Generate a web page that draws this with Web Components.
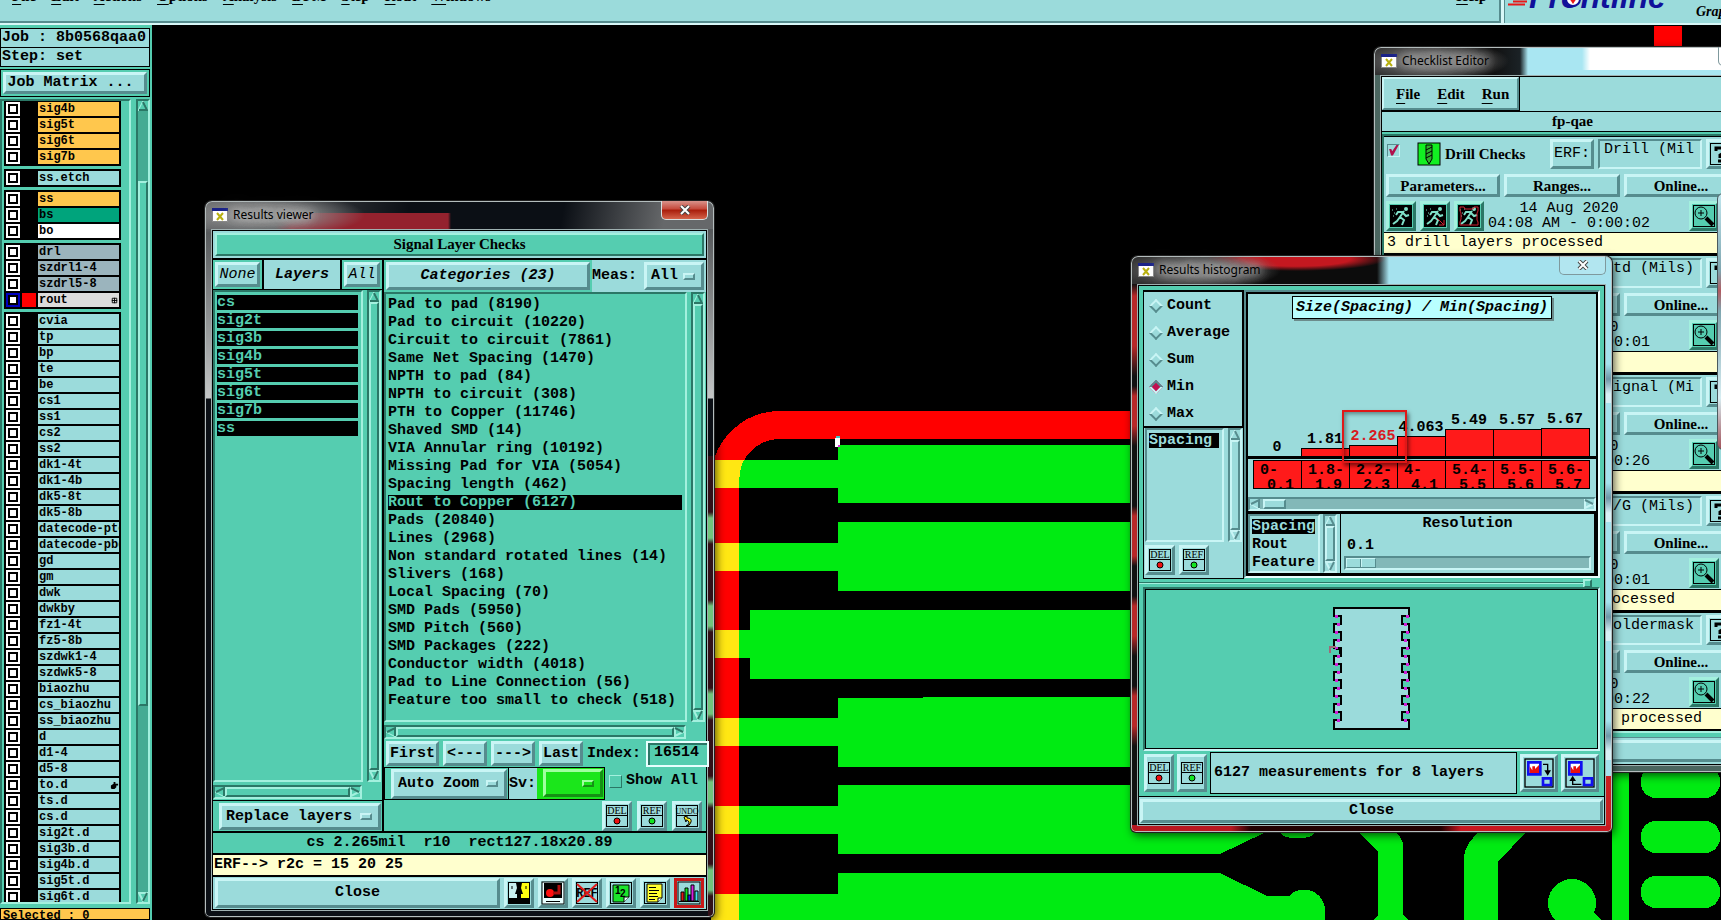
<!DOCTYPE html>
<html lang="en">
<head>
<meta charset="utf-8">
<title>Results viewer</title>
<style>
    body {
        margin: 0;
        height: 100vh;
        overflow: hidden;
        display: grid;
        grid-template-rows: 25px minmax(0, 1fr);
        background: #000;
        color: #000;
        font: bold 15px/18px "Liberation Mono", monospace;
        --aqua: #9bdbdb;
        --teal: #55cdb0;
        --orange: #ffc74d;
        --cream: #ffffce;
    }

    main {
        display: grid;
        grid-template-columns: 152px minmax(0, 1fr);
        min-height: 0;
    }
</style>
</head>
<body>
<app-menubar></app-menubar>
<main>
    <layer-sidebar></layer-sidebar>
    <work-area></work-area>
</main>

<script>
const base = `
    *, *::before { box-sizing: border-box; }
    :host { display: block; box-sizing: border-box; }
    button, input, select { font: inherit; color: inherit; margin: 0; border-radius: 0; outline: none; }
    .aqua { --face: #9bdbdb; --hi: #c9f5f5; --lo: #568c8e; }
    .teal { --face: #55cdb0; --hi: #a3f0de; --lo: #2b7766; }
    .serif { font-family: "Liberation Serif", serif; }
`;

function define(name, html, setup) {
  const template = document.createElement("template");
  template.innerHTML = html;
  customElements.define(name, class extends HTMLElement {
    constructor() {
      super();
      this.attachShadow({ mode: "open" }).appendChild(template.content.cloneNode(true));
    }

    connectedCallback() {
      if (setup && !this.ready) {
        this.ready = true;
        setup(this, this.shadowRoot);
      }
    }
  });
}

const runner = (extra, color) => `
    <rect x="1" y="1" width="22" height="22" fill="#000"/>
    <g fill="none" stroke="${color}" stroke-width="2">
        <path d="M15 7L11 13L15 16L13 21M11 13L8 17L4 20M14 8L9 8L7 11M14 9L17 12L20 11"/>
        <path d="M3 6h1M5 9h1M7 5h1M4 12h1" stroke-width="1"/>
    </g>
    <circle cx="17" cy="5" r="2" fill="${color}"/>${extra}`;

const box = '<rect x="1.5" y="1.5" width="21" height="21" fill="none" stroke="#000"/>';

const labelled = (text, mark, size = 10) => `${box}
    <path d="M1 11.5H23" stroke="#000"/>
    <text x="12" y="10" text-anchor="middle" font-family="Liberation Serif, serif" font-size="${size}" font-weight="400">${text}</text>${mark}`;

const chart = `<path d="M4 4h9v9H4z" fill="#fff" stroke="#1010f0" stroke-width="2"/><path d="M5 7l2 3V7h2v2l3-3v6H5z" fill="#e81010"/>
    <path d="M15 16h6v5h-6z" fill="none" stroke="#1010f0" stroke-width="2"/>`;

const ICONS = {
  del: labelled("DEL", '<circle cx="12" cy="17" r="3" fill="#f01010" stroke="#000"/>'),
  ref: labelled("REF", '<circle cx="12" cy="17" r="3" fill="#12e622" stroke="#000"/>'),
  undo: labelled("UNDO", '<path d="M9 13l3-1v2q5 0 4 4t-5 4q4-2 3-4t-3-2v2z" fill="#ffee20" stroke="#000"/>', 8),
  vase: `<rect x="1" y="1" width="11" height="22" fill="#c9f0f0"/><rect x="12" y="1" width="11" height="22" fill="#ffff10"/>
    <path d="M9 2h6l-1 5 2 6h-2v4h8v5H2v-5h8v-4H8l2-6z"/><path d="M5 5v3M19 5v3" stroke="#000"/>` + box,
  monitor: `<rect x="1" y="1" width="22" height="22" fill="#e8ffff" stroke="#000"/><path d="M3 2h18v15H3z"/>
    <circle cx="9" cy="12" r="4" fill="#ff1010"/><path d="M12 12h6V4" stroke="#b01010" stroke-width="3" fill="none"/><path d="M5 20.5h14" stroke="#000"/>`,
  noref: box + `<text x="12" y="16" text-anchor="middle" font-family="Liberation Mono, monospace" font-size="12">REF</text>
    <path d="M2 3L22 21M22 3L2 21" stroke="#e01818" stroke-width="2"/>`,
  pages: box + `<path d="M4 4h16v12l-5 5H4z" fill="#1be42b" stroke="#000"/><path d="M20 16h-5v5" fill="#e8ffff" stroke="#000"/>
    <text x="6" y="13" font-family="Liberation Sans, sans-serif" font-size="10">1</text><text x="11" y="16" font-family="Liberation Sans, sans-serif" font-size="10">2</text>`,
  notes: box + `<path d="M4 3h15v14l-4 4H4z" fill="#ffff30" stroke="#000"/><path d="M19 17h-4v4" fill="#fff" stroke="#000"/>
    <path d="M6 6.5h7M6 9.5h10M6 12.5h8M6 15.5h9M6 18.5h6" stroke="#000"/>`,
  bars: `<rect x="1" y="1" width="22" height="22" fill="#9bdbdb" stroke="#000"/><path d="M2 20.5h20" stroke="#000"/>
    <g stroke="#000"><path d="M4 11h3v9H4z" fill="#e01818"/><path d="M8 7h3v13H8z" fill="#12e622"/><path d="M11 14h3v6h-3z" fill="#1a1af0"/>
    <path d="M14 4h3v16h-3z" fill="#d820e0"/><path d="M18 10h3v10h-3z" fill="#40e8f0"/></g>`,
  run: runner("", "#7fe0c8"),
  runPick: runner('<path d="M14 14l7 7m0-5v5h-5" stroke="#d02030" fill="none"/>', "#7fe0c8"),
  runAll: runner('<path d="M3 3h4l1 2h8l1-2h4v4l-1 2v7l1 2v3H3v-3l1-3V9L3 7z" stroke="#d02030" stroke-width="1" fill="none"/>', "#7fe0c8"),
  zoom: box + `<circle cx="9" cy="9" r="6" fill="none" stroke="#000"/>
    <path d="M6 9h6M9 6v6" stroke="#000"/><path d="M14 14l7 7" stroke="#000" stroke-width="4"/>`,
  help: box + '<path d="M7 9V6h9v4l-5 3v3M9 19h5" fill="none" stroke="#000" stroke-width="3"/>',
  drill: `<rect x="1" y="1" width="22" height="22" fill="#12f022" stroke="#000"/>
    <path d="M9 3h6v14l-3 5-3-5z" fill="#30b030" stroke="#000"/><path d="M9 8l6-3M9 12l6-3M9 16l6-3" stroke="#000"/>`,
  send: box + chart + '<path d="M15 5.5h3.500V12" fill="none" stroke="#000"/><path d="M16 10h5l-2.500 4z"/>',
  fetch: box + chart + '<path d="M6.500 17v3.500H13" fill="none" stroke="#000"/><path d="M4 18h5l-2.500-4z"/>',
};

// Push button with a Motif bevel; tone picks the colour set
define("motif-button", `
<style>${base}
    button {
        display: flex;
        align-items: center;
        justify-content: center;
        width: 100%;
        height: 100%;
        padding: 0;
        white-space: pre;
        background: var(--face);
        border: 3px solid;
        border-color: var(--hi) var(--lo) var(--lo) var(--hi);
    }
</style>
<button type="button" class="aqua"><slot></slot></button>
`, (host, root) => {
  if (host.getAttribute("tone")) root.querySelector("button").className = host.getAttribute("tone");
});

define("tool-button", `
<style>${base}
    :host { width: 30px; height: 30px; flex: none; }
    button {
        display: grid;
        place-items: center;
        width: 100%;
        height: 100%;
        padding: 0;
        background: var(--face);
        border: 3px solid;
        border-color: var(--hi) var(--lo) var(--lo) var(--hi);
    }
    :host([active]) button { border-color: #c81818; }
    svg { display: block; width: 24px; height: 24px; }
    :host([big]) svg { width: 32px; height: 32px; }
</style>
<button type="button" class="aqua"></button>
`, (host, root) => {
  const button = root.querySelector("button");
  button.className = host.getAttribute("tone") || "aqua";
  button.setAttribute("aria-label", host.getAttribute("label") || host.getAttribute("icon"));
  button.innerHTML = `<svg viewBox="0 0 24 24" aria-hidden="true">${ICONS[host.getAttribute("icon")]}</svg>`;
});

define("option-menu", `
<style>${base}
    label {
        display: flex;
        align-items: center;
        height: 100%;
        padding: 0 6px 0 4px;
        background: var(--face);
        border: 3px solid;
        border-color: var(--hi) var(--lo) var(--lo) var(--hi);
    }
    select { flex: 1; min-width: 0; appearance: none; border: 0; padding: 0; background: transparent; }
    i {
        width: 12px;
        height: 7px;
        border: 2px solid;
        border-color: var(--hi) var(--lo) var(--lo) var(--hi);
    }
    .lime { --face: #1be61b; --hi: #a0ffa0; --lo: #159015; }
</style>
<label class="aqua"><select><option></option></select><i></i></label>
`, (host, root) => {
  const select = root.querySelector("select");
  root.querySelector("label").className = host.getAttribute("tone") || "aqua";
  select.setAttribute("aria-label", host.getAttribute("label"));
  root.querySelector("option").textContent = host.getAttribute("value") || "";
});

define("motif-scroll", `
<style>${base}
    .bar {
        display: flex;
        flex-direction: column;
        width: 14px;
        height: 100%;
        border: 2px solid;
        border-color: var(--lo) var(--hi) var(--hi) var(--lo);
        background: var(--trough);
    }
    .teal { --trough: #45ab93; }
    .aqua { --trough: #82b8b8; }
    .thumb {
        background: var(--face);
        border: 2px solid;
        border-color: var(--hi) var(--lo) var(--lo) var(--hi);
    }
    svg { display: block; width: 10px; height: 10px; flex: none; background: var(--face); }
    .flat { flex-direction: row; width: 100%; height: 14px; }
    .flat svg { transform: rotate(-90deg); }
    path { fill: var(--face); stroke: var(--hi); stroke-width: 2; }
    path + path { stroke: var(--lo); }
</style>
<div class="bar">
    <svg viewBox="0 0 10 10"><path d="M1 9L5 1L9 9z"/><path d="M1 9H9L5 1"/></svg>
    <span class="pre"></span><span class="thumb"></span><span class="post"></span>
    <svg viewBox="0 0 10 10"><path d="M5 9L1 1H9z"/><path d="M5 9L9 1"/></svg>
</div>
`, (host, root) => {
  const [before, size] = (host.getAttribute("range") || "0 100").split(" ").map(Number);
  root.querySelector(".bar").classList.add(host.getAttribute("tone") || "teal");
  root.querySelector(".bar").classList.toggle("flat", host.hasAttribute("horizontal"));
  root.querySelector(".pre").style.flex = before;
  root.querySelector(".thumb").style.flex = size;
  root.querySelector(".post").style.flex = 100 - before - size;
});

define("pick-list", `
<style>${base}
    :host { overflow: hidden; }
    ul {
        height: 100%;
        margin: 0;
        padding: 3px 3px 0 2px;
        list-style: none;
        border: 2px solid;
        border-color: var(--lo) var(--hi) var(--hi) var(--lo);
        background: var(--face);
        overflow: hidden;
    }
    li { height: 15px; line-height: 15px; margin-bottom: 3px; white-space: pre; }
    li.on { background: #000; color: var(--face); }
</style>
<ul class="teal"></ul>
`, (host, root) => {
  const list = root.querySelector("ul");
  const selected = (host.getAttribute("selected") || "").split("|");
  list.className = host.getAttribute("tone") || "teal";
  for (const name of host.getAttribute("items").split("|")) {
    const item = document.createElement("li");
    item.textContent = name;
    item.classList.toggle("on", selected.includes(name));
    list.appendChild(item);
  }
});

// Top-level menu bar, scrolled partly out of view
define("app-menubar", `
<style>${base}
    :host {
        display: flex;
        gap: 3px;
        overflow: hidden;
        background: #d8f8f8;
        padding-bottom: 2px;
        font: bold 15px/18px "Liberation Serif", serif;
    }
    nav, .brand { background: var(--aqua); }
    nav {
        flex: 1;
        display: flex;
        gap: 15px;
        padding: 0 12px;
        border: solid #568c8e;
        border-width: 0 2px 2px 0;
    }
    a { color: inherit; text-decoration: none; margin-top: -13px; }
    a::first-letter { text-decoration: underline; text-underline-offset: 3px; }
    a:last-child { margin-left: auto; }
    .brand { width: 217px; border-left: 1px solid #568c8e; }
    svg { display: block; width: 100%; height: 23px; }
</style>
<nav>
    <a href="#">File</a><a href="#">Edit</a><a href="#">Actions</a><a href="#">Options</a><a href="#">Analysis</a><a href="#">DFM</a><a href="#">Step</a><a href="#">Rout</a><a href="#">Windows</a><a href="#">Help</a>
</nav>
<div class="brand">
    <svg viewBox="0 0 217 23" preserveAspectRatio="xMinYMin slice">
        <path d="M8 1.5h14M3 4.5h17M14 -1.5h10" stroke="#e81818" stroke-width="2"/>
        <text x="24" y="8" font-family="Liberation Sans, sans-serif" font-style="italic" font-size="32" fill="#10109a">Frontline</text>
        <circle cx="68" cy="-1" r="7" fill="#fff" stroke="#10109a" stroke-width="2"/>
        <path d="M64 -2L68 4L72 -2z" fill="#e81818"/>
        <text x="191" y="16" font-style="italic" font-size="14">Graphicom</text>
    </svg>
</div>
`);

define("layer-row", `
<style>${base}
    :host { display: flex; height: 16px; padding: 1px 1px 1px 0; font-size: 12px; line-height: 14px; }
    input {
        appearance: none;
        flex: none;
        width: 14px;
        height: 14px;
        margin-left: 1px;
        background: #fff;
        border: 2px solid var(--box, #fff);
        box-shadow: inset 0 0 0 2px #000;
    }
    .swatch { width: 14px; margin: 0 2px; background: var(--swatch, #000); }
    label {
        flex: 1;
        overflow: hidden;
        padding-left: 1px;
        background: var(--row, var(--aqua));
        white-space: nowrap;
        display: flex;
        justify-content: space-between;
    }
    svg { width: 9px; height: 9px; margin: 3px 0; flex: none; }
</style>
<input type="checkbox" id="pick"><span class="swatch"></span><label for="pick"><slot></slot></label>
`, (host, root) => {
  const marks = {
    grid: '<path d="M2.5 2.5h5v5h-5zM5 2v6M2 5h6" fill="none" stroke="#000"/>',
    hand: '<path d="M1 5l3-2V1h2v2h3v2H7v2L5 9H2L1 8z"/>',
  };
  const mark = host.getAttribute("mark");
  if (mark) root.querySelector("label").insertAdjacentHTML("beforeend", `<svg viewBox="0 0 10 10">${marks[mark]}</svg>`);
});

const LAYER_GROUPS = [
  { rows: "sig4b sig5t sig6t sig7b", color: "#ffc74d" },
  { rows: "ss.etch" },
  { rows: "ss bs bo", colors: { ss: "#ffc74d", bs: "#00a47c", bo: "#fff" } },
  { rows: "drl szdrl1-4 szdrl5-8 rout", color: "#9bb4bd", colors: { rout: "#dcdcdc" } },
  { rows: "cvia tp bp te be cs1 ss1 cs2 ss2 dk1-4t dk1-4b dk5-8t dk5-8b datecode-pte datecode-pbe gd gm dwk dwkby fz1-4t fz5-8b szdwk1-4 szdwk5-8 biaozhu cs_biaozhu ss_biaozhu d d1-4 d5-8 to.d ts.d cs.d sig2t.d sig3b.d sig4b.d sig5t.d sig6t.d" },
];

define("layer-sidebar", `
<style>${base}
    :host {
        display: flex;
        flex-direction: column;
        min-height: 0;
        overflow: hidden;
        background: var(--teal);
        padding: 3px 2px 0 0;
    }
    .info { border: 1px solid #000; background: var(--aqua); height: 20px; padding-left: 1px; white-space: pre; }
    .info + .info { margin-top: -1px; }
    .matrix { border: 1px solid #000; height: 28px; margin: 2px 0; padding: 2px; }
    .matrix motif-button { height: 22px; }
    .lists { flex: 1; min-height: 0; display: flex; gap: 5px; }
    .frame {
        flex: 1;
        min-width: 0;
        overflow: hidden;
        padding: 0 8px 0 2px;
        border: 2px solid;
        border-color: #2b7766 #a3f0de #a3f0de #2b7766;
    }
    .group { background: #000; padding: 1px; margin-bottom: 3px; }
    .group:first-child { padding-top: 0; }
    .selected { border: 1px solid #000; background: var(--orange); margin-top: 4px; height: 12px; padding-left: 2px; font-size: 12px; line-height: 15px; white-space: pre; overflow: hidden; }
</style>
<div class="info">Job : 8b0568qaa0</div>
<div class="info">Step: set</div>
<div class="matrix"><motif-button>Job Matrix ... </motif-button></div>
<div class="lists">
    <div class="frame"></div>
    <motif-scroll range="9 67"></motif-scroll>
</div>
<div class="selected">Selected : 0</div>
`, (host, root) => {
  const frame = root.querySelector(".frame");
  for (const { rows, color, colors = {} } of LAYER_GROUPS) {
    const group = document.createElement("div");
    group.className = "group";
    for (const name of rows.split(" ")) {
      const row = document.createElement("layer-row");
      row.textContent = name;
      const fill = colors[name] || color;
      if (fill) row.style.setProperty("--row", fill);
      if (name === "rout") {
        row.setAttribute("mark", "grid");
        row.style.setProperty("--swatch", "#f00");
        row.style.setProperty("--box", "#0000c0");
      }
      if (name === "to.d") row.setAttribute("mark", "hand");
      group.appendChild(row);
    }
    frame.appendChild(group);
  }
});

// Copper (green), rout path (red) and their overlap (yellow)
define("pcb-canvas", `
<style>${base}
    svg { display: block; width: 100%; height: 100%; background: #000; }
</style>
<svg aria-label="Board view">
    <g transform="translate(-152 -25)" shape-rendering="crispEdges">
        <g fill="#00eb12">
            <path d="M725 460H838V445H1180V503H838V488H725z"/>
            <path d="M725 543H838V522H1180V591H838V571H725z"/>
            <path d="M725 630H750V610H1180V679H750V658H725z"/>
            <path d="M725 718H838V698H923V697H1180V767H838V746H725z"/>
            <path d="M725 806H838V785H1315V833A19 9 0 0 1 1280 833H1264L1220 854H838V834H725z"/>
            <path d="M725 894H838V873H1220L1267 896H1289A21 21 0 0 1 1325 909V920H725z"/>
            <path d="M1358 831L1378 852V915L1373 920H1408L1403 915V845Q1403 838 1394 831z"/>
            <path d="M1480 831Q1464 845 1464 858V920H1498V862L1527 831z"/>
            <circle cx="1572" cy="903" r="24"/>
            <path d="M1590 908L1601 920H1570z"/>
            <rect x="1612" y="740" width="17" height="180"/>
            <rect x="1641" y="766" width="79" height="32" rx="15"/>
            <rect x="1641" y="821" width="79" height="32" rx="15"/>
            <rect x="1641" y="876" width="79" height="32" rx="15"/>
        </g>
        <path d="M1180 425H780A55 55 0 0 0 725 480V920" fill="none" stroke="#f00" stroke-width="28"/>
        <rect x="1654" y="26" width="28" height="40" fill="#f00"/>
        <path d="M711 460H744Q739 468 739 488H711zM711 543h28v28h-28zM711 630h28v28h-28zM711 718h28v28h-28zM711 806h28v28h-28zM711 894h28v26h-28z" fill="#ffe713"/>
        <path d="M835 438h5v9h-5z" fill="#fff"/>
        <path d="M836 436h4v2h-4z" fill="#40c0c0"/>
        <path d="M838 445h2v2h-2z" fill="#e020e0"/>
    </g>
</svg>
`);

// Aero glass frame; the client area is slotted in
define("glass-window", `
<style>${base}
    :host {
        display: flex;
        flex-direction: column;
        padding: 0 6px 6px;
        border-radius: 7px 7px 5px 5px;
        box-shadow: inset 0 0 0 1px #b4bdbd, 0 0 0 1px #202020, 2px 3px 10px rgba(0, 0, 0, .7);
    }
    header { display: flex; align-items: center; gap: 5px; height: 28px; flex: none; padding-left: 1px; }
    header svg { width: 16px; height: 14px; flex: none; }
    h2 {
        flex: 1;
        margin: 0;
        font: 12px/18px "Noto Sans", sans-serif;
        text-shadow: 0 0 8px #ccc, 0 0 12px #bbb, 0 0 16px #aaa;
    }
    button {
        align-self: flex-start;
        width: 47px;
        height: 19px;
        padding: 0;
        border: 1px solid #d8dede;
        border-top: 0;
        border-radius: 0 0 5px 5px;
        background: linear-gradient(#d9938b, #c5483a 45%, #a81c0a 50%, #d4634a);
    }
    :host([quiet]) button { background: rgba(255, 255, 255, .15); border-color: #7f999d; }
    button svg { width: 12px; height: 10px; vertical-align: top; margin-top: 4px; }
    .client { flex: 1; min-height: 0; border: 1px solid #9fb0b0; background: #000; padding: 1px; }
</style>
<header>
    <svg viewBox="0 0 16 14"><path d="M.5.5h15v13H.5z" fill="#fff" stroke="#888"/><path d="M0 0h16v3H0z" fill="#1a2288"/><path d="M5 5l6 7M11 5l-6 7" stroke="#b8b010" stroke-width="2"/></svg>
    <h2></h2>
    <button type="button" aria-label="Close window"><svg viewBox="0 0 12 10"><path d="M2 1l8 8M10 1L2 9" stroke="#444" stroke-width="4"/><path d="M2 1l8 8M10 1L2 9" stroke="#fff" stroke-width="2"/></svg></button>
</header>
<div class="client"><slot></slot></div>
`, (host, root) => {
  root.querySelector("h2").textContent = host.getAttribute("heading");
});

define("results-viewer", `
<style>${base}
    :host {
        display: grid;
        grid-template-rows: 27px minmax(0, 1fr) 20px 20px 32px;
        gap: 2px;
        height: 100%;
        background: #000;
    }
    h3 {
        margin: 0;
        border: 2px solid #9bdbdb;
        font-size: 15px;
        text-align: center;
    }
    h3 span {
        display: block;
        height: 23px;
        line-height: 18px;
        border: 2px solid;
        border-color: var(--hi) var(--lo) var(--lo) var(--hi);
        background: var(--face);
    }
    .columns { display: grid; grid-template-columns: 169px minmax(0, 1fr); gap: 2px; min-height: 0; }
    .col { display: flex; flex-direction: column; min-height: 0; min-width: 0; background: var(--teal); }
    .tabs { display: flex; gap: 2px; height: 30px; padding-bottom: 1px; background: #000; font-style: italic; }
    .tabs div { background: var(--teal); padding: 2px; width: 49px; }
    .tabs .mid { flex: 1; background: var(--aqua); text-align: center; line-height: 26px; }
    .tabs div:last-child { width: 40px; }
    .tabs motif-button { height: 25px; font-weight: 400; }
    .list { flex: 1; min-height: 0; display: grid; grid-template-columns: minmax(0, 1fr) 14px; gap: 4px; padding-right: 1px; }
    .flat { padding: 3px 20px 1px 0; }
    .replace { border-top: 1px solid #000; padding: 2px 1px 1px 6px; height: 31px; }
    .replace option-menu { height: 27px; }
    .cats { display: flex; height: 32px; background: var(--aqua); }
    .cats .pick { width: 208px; padding: 2px; background: var(--teal); font-style: italic; }
    .cats .pick motif-button { height: 28px; }
    .cats label { flex: 1; line-height: 32px; }
    .cats option-menu { width: 60px; height: 28px; margin: 2px 2px 0 0; }
    .nav { display: flex; align-items: center; gap: 4px; height: 27px; padding-left: 2px; }
    .nav motif-button { flex: none; width: 44px; height: 25px; }
    .nav motif-button:first-child { width: 53px; }
    .nav label { flex: 1; text-align: right; padding-right: 1px; }
    .nav input {
        width: 63px;
        height: 26px;
        padding: 0 0 2px 6px;
        background: var(--teal);
        border: 2px solid #e8ffff;
        box-shadow: inset 2px 2px #2b7766;
    }
    .zoom { display: flex; height: 33px; }
    .zoom > div { border: 1px solid #000; display: flex; align-items: center; }
    .zoom .auto { width: 125px; padding: 0 1px 0 6px; }
    .zoom .sv { width: 97px; margin-left: -1px; background: var(--aqua); }
    .zoom .auto option-menu { flex: 1; height: 30px; }
    .zoom .green { flex: 1; height: 31px; margin-left: 1px; padding: 1px 1px 1px 6px; background: #1be61b; }
    .zoom .green option-menu { height: 28px; }
    .zoom .all { display: flex; gap: 4px; padding: 5px 0 0 4px; white-space: nowrap; line-height: 18px; }
    .all input {
        appearance: none;
        width: 13px;
        height: 13px;
        margin-top: 3px;
        border: 1px solid;
        border-color: #a3f0de #2b7766 #2b7766 #a3f0de;
    }
    .tools { display: flex; justify-content: flex-end; align-items: flex-end; gap: 5px; height: 31px; padding: 0 4px; }
    .status, .erf { line-height: 20px; white-space: pre; }
    .status { background: var(--teal); text-align: center; }
    .erf { background: var(--cream); padding-left: 1px; }
    .foot { display: flex; gap: 4px; background: var(--aqua); padding: 1px 2px; }
    .foot motif-button { flex: 1; height: 30px; }
</style>
<h3 class="serif teal"><span>Signal Layer Checks</span></h3>
<div class="columns">
    <div class="col">
        <div class="tabs">
            <div><motif-button>None</motif-button></div>
            <div class="mid">Layers</div>
            <div><motif-button>All</motif-button></div>
        </div>
        <div class="list">
            <pick-list items="cs|sig2t|sig3b|sig4b|sig5t|sig6t|sig7b|ss" selected="cs|sig2t|sig3b|sig4b|sig5t|sig6t|sig7b|ss"></pick-list>
            <motif-scroll></motif-scroll>
        </div>
        <div class="flat"><motif-scroll horizontal></motif-scroll></div>
        <div class="replace"><option-menu label="Replace layers" value="Replace layers"></option-menu></div>
    </div>
    <div class="col">
        <div class="cats">
            <div class="pick"><motif-button>Categories (23)</motif-button></div>
            <label>Meas:</label>
            <option-menu label="Meas" value="All"></option-menu>
        </div>
        <div class="list">
            <pick-list selected="Rout to Copper (6127)" items="Pad to pad (8190)|Pad to circuit (10220)|Circuit to circuit (7861)|Same Net Spacing (1470)|NPTH to pad (84)|NPTH to circuit (308)|PTH to Copper (11746)|Shaved SMD (14)|VIA Annular ring (10192)|Missing Pad for VIA (5054)|Spacing length (462)|Rout to Copper (6127)|Pads (20840)|Lines (2968)|Non standard rotated lines (14)|Slivers (168)|Local Spacing (70)|SMD Pads (5950)|SMD Pitch (560)|SMD Packages (222)|Conductor width (4018)|Pad to Line Connection (56)|Feature too small to check (518)"></pick-list>
            <motif-scroll></motif-scroll>
        </div>
        <div class="flat"><motif-scroll horizontal></motif-scroll></div>
        <div class="nav">
            <motif-button>First</motif-button><motif-button>&lt;---</motif-button><motif-button>---&gt;</motif-button><motif-button>Last</motif-button>
            <label for="index">Index:</label><input id="index" value="16514">
        </div>
        <div class="zoom">
            <div class="auto"><option-menu label="Zoom mode" value="Auto Zoom"></option-menu></div>
            <div class="sv"><span>Sv:</span><span class="green"><option-menu tone="lime" label="Sv"></option-menu></span></div>
            <label class="all"><input type="checkbox">Show All</label>
        </div>
        <div class="tools">
            <tool-button icon="del"></tool-button><tool-button icon="ref"></tool-button><tool-button icon="undo"></tool-button>
        </div>
    </div>
</div>
<div class="status">cs 2.265mil  r10  rect127.18x20.89</div>
<div class="erf">ERF--&gt; r2c = 15 20 25</div>
<div class="foot">
    <motif-button>Close</motif-button>
    <tool-button icon="vase"></tool-button><tool-button icon="monitor"></tool-button><tool-button icon="noref"></tool-button><tool-button icon="pages"></tool-button><tool-button icon="notes"></tool-button><tool-button icon="bars" active></tool-button>
</div>
`);

const BINS = [
  ["0", 0, "0-", "0.1"],
  ["1.81", 8, "1.8-", "1.9"],
  ["2.265", 11, "2.2-", "2.3"],
  ["4.063", 20, "4-", "4.1"],
  ["5.49", 27, "5.4-", "5.5"],
  ["5.57", 27, "5.5-", "5.6"],
  ["5.67", 28, "5.6-", "5.7"],
];

define("spacing-chart", `
<style>${base}
    :host {
        position: relative;
        display: flex;
        flex-direction: column;
        height: 219px;
        border: 1px solid #000;
        background: var(--aqua);
    }
    h3 {
        align-self: center;
        margin: 2px 0 0;
        padding: 1px 3px;
        font: inherit;
        font-style: italic;
        line-height: 19px;
        background: #b9ffff;
        border: 1px solid #000;
        box-shadow: 2px 2px #6c8c8c;
    }
    .bars, .bins { display: grid; grid-template-columns: repeat(7, 48px); padding-left: 5px; }
    .bars { flex: 1; align-items: end; border-bottom: 3px solid #000; }
    .bars div { text-align: center; line-height: 16px; }
    .bars i { display: block; background: #ff1a1a; border: 1px solid #000; border-bottom: 0; margin-right: -1px; }
    .bars .hot { color: #d81a20; }
    .bins { height: 29px; margin: 1px 0 8px; }
    .bins div {
        height: 29px;
        margin-right: -1px;
        padding: 2px 7px 0 6px;
        line-height: 15px;
        background: #ff1a1a;
        border: 1px solid #000;
        overflow: hidden;
    }
    .bins span { display: block; text-align: right; }
    .callout {
        position: absolute;
        left: 94px;
        top: 116px;
        width: 65px;
        height: 53px;
        border: 2px solid #e01818;
        box-shadow: 2px 3px 4px rgba(0, 0, 0, .5), inset 2px 2px 4px rgba(0, 0, 0, .4);
    }
</style>
<h3>Size(Spacing) / Min(Spacing)</h3>
<div class="bars"></div>
<div class="bins"></div>
<motif-scroll horizontal tone="aqua" range="1 6"></motif-scroll>
<div class="callout"></div>
`, (host, root) => {
  for (const [value, height, from, to] of BINS) {
    root.querySelector(".bars").insertAdjacentHTML("beforeend",
      `<div class="${value === "2.265" ? "hot" : ""}">${value}${height ? `<i style="height:${height}px"></i>` : ""}</div>`);
    root.querySelector(".bins").insertAdjacentHTML("beforeend", `<div>${from}<span>${to}</span></div>`);
  }
});

define("board-outline", `
<style>${base}
    :host {
        display: grid;
        place-items: center;
        border: 2px solid;
        border-color: #2b7766 #c9f5f5 #c9f5f5 #2b7766;
        outline: 1px solid #000;
        outline-offset: -3px;
        background: var(--teal);
    }
    svg { display: block; width: 90px; height: 124px; }
</style>
<svg viewBox="-6 0 90 124" shape-rendering="crispEdges" aria-label="Board outline"></svg>
`, (host, root) => {
  const left = [];
  const dots = [];
  let x = 1;
  for (let y = 9; y < 118; y += 8) {
    left.push([x, y]);
    x = x === 1 ? 8 : 1;
    left.push([x, y]);
    dots.push([x === 1 ? 5 : 3, y]);
  }
  const right = left.map(([px, py]) => [77 - px, py]).reverse();
  const points = [[1, 1], ...left, [1, 113], [1, 122], [76, 122], [76, 113], ...right, [76, 1]];
  root.querySelector("svg").innerHTML =
    `<polygon points="${points.join(" ")}" fill="#9bdbdb" stroke="#000" stroke-width="2"/>` +
    dots.map(([dx, dy]) => `<rect x="${dx - 1}" y="${dy - 1}" width="3" height="3" fill="#d020d8"/><rect x="${76 - dx}" y="${dy - 1}" width="3" height="3" fill="#d020d8"/>`).join("") +
    '<path d="M-3 46v-6h6" fill="none" stroke="#a06a78" stroke-width="2"/><path d="M3 42h3v4h3" fill="none" stroke="#000"/>';
});

define("results-histogram", `
<style>${base}
    :host { display: flex; flex-direction: column; height: 100%; background: var(--teal); }
    .top { display: grid; grid-template-columns: 101px minmax(0, 1fr); height: 289px; margin: 4px 4px 0; }
    .side { display: flex; flex-direction: column; border: 1px solid #000; background: var(--aqua); }
    .radios { border: 1px solid #000; border-width: 1px 1px 2px 0; height: 137px; }
    .radios label { display: flex; align-items: center; gap: 6px; height: 27px; padding-left: 7px; }
    input[type=radio] {
        appearance: none;
        width: 10px;
        height: 10px;
        transform: rotate(45deg);
        border: 2px solid;
        border-color: #c9f5f5 #568c8e #568c8e #c9f5f5;
    }
    input[type=radio]:checked { background: #c01050; border-color: #568c8e #c9f5f5 #c9f5f5 #568c8e; }
    .list { display: grid; grid-template-columns: minmax(0, 1fr) 14px; gap: 4px; height: 114px; padding: 0 1px; }
    .pair { display: flex; gap: 4px; padding: 3px 1px; }
    .chart { border: 2px solid; border-color: #568c8e #e8ffff #e8ffff #568c8e; min-width: 0; background: #000; padding: 1px; height: 288px; }
    .below { display: grid; grid-template-columns: 72px 14px minmax(0, 1fr); gap: 3px; margin: 1px 2px 0 1px; height: 60px; background: var(--aqua); border-top: 1px solid #000; }
    .res { border: 1px solid #000; border-width: 0 1px; padding: 0 3px; }
    .res label { display: block; text-align: center; line-height: 20px; }
    .res output { display: block; line-height: 20px; padding-left: 3px; margin-top: 2px; }
    input[type=range] {
        appearance: none;
        display: block;
        width: 100%;
        height: 14px;
        background: #82b8b8;
        border: 2px solid;
        border-color: #568c8e #c9f5f5 #c9f5f5 #568c8e;
    }
    input[type=range]::-webkit-slider-thumb {
        appearance: none;
        width: 30px;
        height: 10px;
        background: linear-gradient(90deg, transparent 13px, #568c8e 13px 14px, #c9f5f5 14px 15px, transparent 15px) #9bdbdb;
        border: 1px solid;
        border-color: #c9f5f5 #568c8e #568c8e #c9f5f5;
    }
    .sash { display: flex; align-items: center; height: 8px; padding-right: 12px; flex: none; }
    .sash::before { content: ""; flex: 1; height: 2px; border-top: 1px solid #2b7766; border-bottom: 1px solid #a3f0de; }
    .sash i { width: 9px; height: 9px; border: 2px solid; border-color: #a3f0de #2b7766 #2b7766 #a3f0de; }
    board-outline { flex: 1; margin: 0 4px; }
    .info { display: flex; align-items: center; gap: 3px; height: 46px; padding: 0 5px 2px; flex: none; border-bottom: 1px solid #000; }
    .info p { flex: 1; height: 42px; margin: 0; border: 1px solid #000; background: var(--aqua); padding-left: 3px; line-height: 40px; white-space: nowrap; }
    .info tool-button { height: 38px; }
    .info tool-button[big] { width: 38px; }
    .close { padding: 2px 1px 1px; background: var(--aqua); height: 27px; flex: none; }
    .close motif-button { height: 24px; }
</style>
<div class="top">
    <div class="side">
        <div class="radios">
            <label><input type="radio" name="stat">Count</label>
            <label><input type="radio" name="stat">Average</label>
            <label><input type="radio" name="stat">Sum</label>
            <label><input type="radio" name="stat" checked>Min</label>
            <label><input type="radio" name="stat">Max</label>
        </div>
        <div class="list">
            <pick-list tone="aqua" items="Spacing" selected="Spacing"></pick-list>
            <motif-scroll tone="aqua"></motif-scroll>
        </div>
        <div class="pair"><tool-button icon="del"></tool-button><tool-button icon="ref"></tool-button></div>
    </div>
    <div class="chart">
        <spacing-chart></spacing-chart>
        <div class="below">
            <pick-list tone="aqua" items="Spacing|Rout|Feature" selected="Spacing"></pick-list>
            <motif-scroll tone="aqua"></motif-scroll>
            <div class="res">
                <label for="res">Resolution</label>
                <output>0.1</output>
                <input id="res" type="range" min="0" max="10" value="0">
            </div>
        </div>
    </div>
</div>
<div class="sash"><i></i></div>
<board-outline></board-outline>
<div class="info">
    <tool-button icon="del"></tool-button><tool-button icon="ref"></tool-button>
    <p>6127 measurements for 8 layers</p>
    <tool-button big icon="send"></tool-button><tool-button big icon="fetch"></tool-button>
</div>
<div class="close"><motif-button>Close</motif-button></div>
`);

define("check-block", `
<style>${base}
    :host {
        display: flex;
        flex-direction: column;
        height: 119px;
        background: var(--aqua);
        border-top: 1px solid #000;
        border-bottom: 2px solid #000;
        font-weight: 400;
    }
    .row { display: flex; gap: 4px; padding: 2px 2px 0; }
    .name { width: 160px; display: flex; align-items: center; gap: 4px; font-weight: 700; white-space: nowrap; overflow: hidden; }
    .name svg { width: 24px; height: 24px; flex: none; margin-left: 13px; }
    .name input {
        appearance: none;
        width: 13px;
        height: 13px;
        flex: none;
        margin: 0 0 8px 1px;
        border: 1px solid;
        border-color: #568c8e #c9f5f5 #c9f5f5 #568c8e;
    }
    .name input:checked::before {
        content: "";
        display: block;
        height: 11px;
        background: #b0104c;
        clip-path: polygon(10% 40%, 30% 40%, 38% 62%, 80% 0, 100% 0, 45% 100%, 28% 100%);
    }
    .erf { width: 44px; height: 30px; }
    .value {
        width: 104px;
        height: 30px;
        padding: 0 0 10px 4px;
        background: transparent;
        border: 2px solid;
        border-color: #568c8e #c9f5f5 #c9f5f5 #568c8e;
    }
    .three { padding-top: 5px; font-weight: 700; }
    .three motif-button { flex: none; width: 114px; height: 23px; }
    .three motif-button:nth-child(2) { width: 116px; }
    .time { flex: none; width: 162px; text-align: center; line-height: 15px; white-space: nowrap; }
    .run { padding-top: 4px; height: 35px; }
    .zoomer { margin-left: 35px; }
    .note { flex: 1; padding-left: 3px; background: var(--cream); border-top: 1px solid #000; line-height: 20px; white-space: nowrap; }
</style>
<div class="row">
    <label class="name serif"><input type="checkbox" checked><svg viewBox="0 0 24 24">${ICONS.drill}</svg><span></span></label>
    <motif-button class="erf">ERF:</motif-button>
    <input class="value" aria-label="ERF">
    <tool-button icon="help"></tool-button>
</div>
<div class="row three serif">
    <motif-button>Parameters...</motif-button><motif-button>Ranges...</motif-button><motif-button>Online...</motif-button>
</div>
<div class="row run">
    <tool-button tone="teal" icon="run"></tool-button><tool-button tone="teal" icon="runPick"></tool-button><tool-button tone="teal" icon="runAll"></tool-button>
    <div class="time">14 Aug 2020<br><span></span></div>
    <tool-button class="zoomer" tone="teal" icon="zoom"></tool-button>
</div>
<div class="note"><slot></slot></div>
`, (host, root) => {
  root.querySelector(".name span").textContent = host.getAttribute("name");
  root.querySelector(".value").value = host.getAttribute("erf");
  root.querySelector(".time span").textContent = `04:08 AM - ${host.getAttribute("took")}`;
});

define("checklist-editor", `
<style>${base}
    :host { display: flex; flex-direction: column; height: 100%; background: var(--teal); }
    .menu { background: var(--aqua); height: 34px; flex: none; }
    nav {
        display: flex;
        align-items: center;
        gap: 17px;
        width: 137px;
        height: 33px;
        padding-left: 12px;
        border: 2px solid;
        border-color: #c9f5f5 #568c8e #568c8e #c9f5f5;
        outline: 1px solid #000;
    }
    a { color: inherit; text-decoration: none; }
    a::first-letter { text-decoration: underline; text-underline-offset: 4px; }
    h3 { margin: 0; height: 21px; flex: none; font-size: 15px; line-height: 19px; text-align: center; background: var(--aqua); border: 1px solid #000; border-width: 1px 0; }
    .blocks { margin: 2px 2px 4px 0; border: 2px solid; border-color: #2b7766 #a3f0de #a3f0de #2b7766; }
    .close { flex: 1; background: var(--aqua); border-top: 1px solid #568c8e; padding: 2px; }
    .close motif-button { height: 100%; }
</style>
<div class="menu"><nav class="serif"><a href="#">File</a><a href="#">Edit</a><a href="#">Run</a></nav></div>
<h3 class="serif">fp-qae</h3>
<div class="blocks">
    <check-block name="Drill Checks" erf="Drill (Mil" took="0:00:02">3 drill layers processed</check-block>
    <check-block name="Board-Drill Checks" erf="Std (Mils)" took="0:00:01">1 layer processed</check-block>
    <check-block name="Signal Layer Checks" erf="Signal (Mi" took="0:00:26">8 layers processed</check-block>
    <check-block name="Power/Ground Checks" erf="P/G (Mils)" took="0:00:01">10 power/ground layers processed</check-block>
    <check-block name="Solder Mask Checks" erf="Soldermask" took="0:00:22">2 solder mask layers were processed</check-block>
</div>
<div class="close"><motif-button></motif-button></div>
`);

define("work-area", `
<style>${base}
    :host { position: relative; overflow: hidden; min-width: 0; }
    pcb-canvas { height: 100%; }
    glass-window { position: absolute; }
    .checklist {
        left: 1222px; top: 22px; width: 397px; height: 725px;
        background:
            radial-gradient(ellipse 75px 20px at 60px 14px, #6c6c6c 40%, transparent),
            linear-gradient(90deg, transparent, #fff 8px) 208px 1px / 200px 22px no-repeat,
            linear-gradient(90deg, #333, #111 120px, #1b2226 146px, #a9e6f2 154px) 0 0 / 100% 28px no-repeat,
            #4b6660;
    }
    .viewer {
        left: 53px; top: 176px; width: 509px; height: 716px;
        background:
            radial-gradient(ellipse 100px 22px at 60px 14px, #8d8e8e 30%, transparent),
            linear-gradient(90deg, transparent, #94222e 16px calc(100% - 3px), transparent) 70px 12px / 176px 16px no-repeat,
            linear-gradient(100deg, #626466, #0b0f15 40%, #0b0f15 70%, #66686a 90%) 0 0 / 100% 28px no-repeat,
            repeating-linear-gradient(#321018 0 56px, #70c47c 62px 82px, #321018 88px) 100% 255px / 6px 460px no-repeat,
            linear-gradient(#55585a 28px, #c4c6c6 197px, #0b0f15 198px);
    }
    .histogram {
        left: 979px; top: 231px; width: 481px; height: 576px;
        background:
            radial-gradient(ellipse 80px 20px at 70px 14px, #767676 30%, transparent),
            radial-gradient(ellipse 90px 12px at 165px 3px, #c41820 60%, transparent),
            linear-gradient(90deg, #333, #0c0c0c 140px, #0c0c0c 246px, #a5e2ee 258px) 0 0 / 100% 28px no-repeat,
            repeating-linear-gradient(#a5e2ee 0 80px, #6f97a8 95px, #d8f0f6 110px 119px) 100% 28px / 6px 492px no-repeat,
            linear-gradient(90deg, #b81820 100px, #200 120px 310px, #c81820 330px) 0 100% / 100% 7px no-repeat,
            linear-gradient(#111 28px, #b82828 40px 90px, #111 120px 130px, #b82828 140px 170px, #111 190px 250px, #b82828 260px 300px, #111 310px 340px, #b82828 350px 380px, #111 400px 430px, #b82828 440px 470px, #111 490px) 0 0 / 6px 100% no-repeat,
            #c82020;
    }
    .edge {
        position: absolute;
        left: 1565px;
        top: 168px;
        width: 40px;
        height: 257px;
        border: 1px solid #4a5a5e;
        border-radius: 6px;
        background: linear-gradient(#bfe6ee, #7fa6b0 30%, #b05a60 38%, #7fa6b0 46%, #d8eef2 80%, #a05058);
    }
</style>
<pcb-canvas></pcb-canvas>
<glass-window class="checklist" heading="Checklist Editor" quiet><checklist-editor></checklist-editor></glass-window>
<glass-window class="viewer" heading="Results viewer"><results-viewer></results-viewer></glass-window>
<glass-window class="histogram" heading="Results histogram" quiet><results-histogram></results-histogram></glass-window>
<div class="edge"></div>
`);
</script>
</body>
</html>
